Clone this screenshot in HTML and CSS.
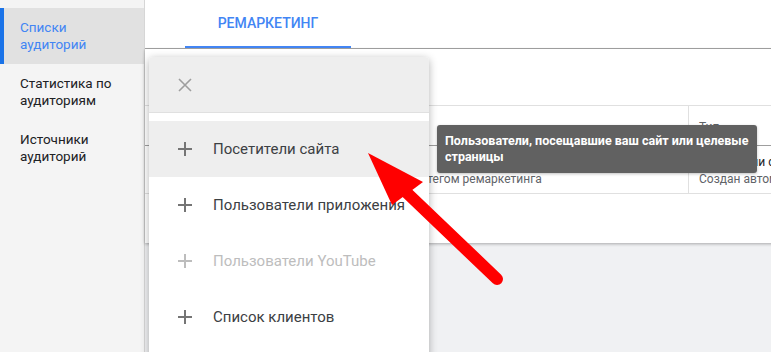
FILE: index.html
```html
<!DOCTYPE html>
<html lang="ru">
  <head>
    <meta charset="UTF-8" />
    <meta name="viewport" content="width=device-width, initial-scale=1.0" />
    <title>Аудитории</title>
    <link rel="stylesheet" href="styles.css">
  </head>
  <body>
    <div class="app">
      <nav class="sidebar">
        <a class="nav-item active">Списки аудиторий</a>
        <a class="nav-item">Статистика по аудиториям</a>
        <a class="nav-item">Источники аудиторий</a>
      </nav>

      <div class="main">
        <header class="tabs">
          <div class="tab active">Ремаркетинг</div>
        </header>

        <section class="card">
          <div class="card-toolbar"></div>
          <div class="table">
            <div class="th"></div>
            <div class="th th-type">Тип</div>
            <div class="td td-name">
              <div class="cell-title">Все посетители</div>
              <div class="cell-sub">Посетители всех страниц вашего сайта с тегом ремаркетинга</div>
            </div>
            <div class="td td-type">
              <div class="cell-title">Посетители сайта</div>
              <div class="cell-sub">Создан автоматически</div>
            </div>
          </div>
        </section>

        <!-- menu for creating a new list -->
        <div class="menu">
          <div class="menu-head">
            <svg class="icon-close" width="14" height="14" viewBox="0 0 14 14">
              <path d="M1 1L13 13M13 1L1 13" />
            </svg>
          </div>
          <ul class="menu-list">
            <li class="menu-item hover">
              <svg class="icon-plus" width="14" height="14" viewBox="0 0 14 14"><path d="M7 0V14M0 7H14" /></svg>
              Посетители сайта
            </li>
            <li class="menu-item">
              <svg class="icon-plus" width="14" height="14" viewBox="0 0 14 14"><path d="M7 0V14M0 7H14" /></svg>
              Пользователи приложения
            </li>
            <li class="menu-item disabled">
              <svg class="icon-plus" width="14" height="14" viewBox="0 0 14 14"><path d="M7 0V14M0 7H14" /></svg>
              Пользователи YouTube
            </li>
            <li class="menu-item">
              <svg class="icon-plus" width="14" height="14" viewBox="0 0 14 14"><path d="M7 0V14M0 7H14" /></svg>
              Список клиентов
            </li>
          </ul>
        </div>

        <div class="tooltip">Пользователи, посещавшие ваш сайт или целевые страницы</div>
      </div>

      <svg class="arrow" width="771" height="352" viewBox="0 0 771 352">
        <line x1="406" y1="192" x2="497" y2="279" />
        <polygon points="368,153 423,182 392,205" />
      </svg>
    </div>
  </body>
</html>
```

FILE: styles.css
```css
body {
  margin: 0;
  font-family: Roboto, "Noto Sans", sans-serif;
  color: #3c4043;
}
.app {
  position: relative;
  display: flex;
  height: 352px;
  overflow: hidden;
}

/* sidebar */
.sidebar {
  width: 144px;
  flex-shrink: 0;
  padding-top: 8px;
  background-color: #f4f4f4;
  border-right: 1px solid #d6d6d6;
}
.nav-item {
  display: flex;
  align-items: center;
  height: 56px;
  box-sizing: border-box;
  padding: 0 20px;
  font-size: 13.5px;
  line-height: 17px;
  color: #202124;
}
.nav-item.active {
  color: #4285f4;
  background-color: #e1e1e1;
  box-shadow: inset 4px 0 0 #1a73e8;
}

/* main area */
.main {
  position: relative;
  flex: 1;
  background-color: #f0f1f3;
}
.tabs {
  height: 48px;
  padding-left: 40px;
  background-color: #fff;
  border-bottom: 1px solid #a6a6a6;
}
.tab {
  display: inline-block;
  box-sizing: border-box;
  width: 166px;
  height: 48px;
  padding-top: 15px;
  text-align: center;
  text-transform: uppercase;
  font-size: 14px;
  font-weight: 500;
  color: #4285f4;
}
.tab.active {
  border-bottom: 2px solid #4285f4;
}

.card {
  height: 194px;
  background-color: #fff;
  box-shadow: 0 1px 3px rgba(0, 0, 0, 0.3);
}
.card-toolbar {
  height: 56px;
  border-bottom: 1px solid #e0e0e0;
}
.table {
  display: grid;
  grid-template-columns: 543px 1fr;
}
.th {
  height: 40px;
  box-sizing: border-box;
  padding: 13px 10px 0;
  font-size: 12px;
  line-height: 16px;
  color: #5f6368;
  border-bottom: 1px solid #9e9e9e;
}
.td {
  height: 48px;
  box-sizing: border-box;
  padding: 8px 10px 0;
  font-size: 12px;
  line-height: 17px;
  white-space: nowrap;
  border-bottom: 1px solid #e0e0e0;
}
.td-name {
  padding-left: 47px;
}
.th-type,
.td-type {
  border-left: 1px solid #e0e0e0;
}
.cell-title {
  color: #202124;
}
.cell-sub {
  color: #5f6368;
}

/* popup menu */
.menu {
  position: absolute;
  left: 4px;
  top: 57px;
  width: 280px;
  height: 310px;
  background-color: #fff;
  border-radius: 4px;
  box-shadow: 0 2px 8px rgba(0, 0, 0, 0.3);
  overflow: hidden;
}
.menu-head {
  display: flex;
  align-items: center;
  height: 55px;
  padding-left: 29px;
  background-color: #eeeeee;
  border-bottom: 1px solid #e0e0e0;
}
.icon-close path {
  stroke: #9e9e9e;
  stroke-width: 1.6;
}
.menu-list {
  list-style: none;
  margin: 0;
  padding: 8px 0 0;
}
.menu-item {
  display: flex;
  align-items: center;
  gap: 21px;
  height: 56px;
  padding-left: 29px;
  font-size: 15px;
  color: #3c4043;
}
.menu-item.hover {
  background-color: #eeeeee;
}
.icon-plus path {
  stroke: #757575;
  stroke-width: 2;
}
.menu-item.disabled {
  color: #bdbdbd;
}
.menu-item.disabled .icon-plus path {
  stroke: #bdbdbd;
}

.tooltip {
  position: absolute;
  left: 292px;
  top: 125px;
  width: 304px;
  padding: 8px;
  font-size: 12.5px;
  font-weight: 700;
  line-height: 16px;
  color: #fff;
  background-color: #616161;
  border-radius: 3px;
  box-shadow: 0 1px 3px rgba(0, 0, 0, 0.25);
}

/* red pointer arrow drawn over the screen */
.arrow {
  position: absolute;
  left: 0;
  top: 0;
  pointer-events: none;
}
.arrow line {
  stroke: #ff0000;
  stroke-width: 12;
  stroke-linecap: round;
}
.arrow polygon {
  fill: #ff0000;
}
```
